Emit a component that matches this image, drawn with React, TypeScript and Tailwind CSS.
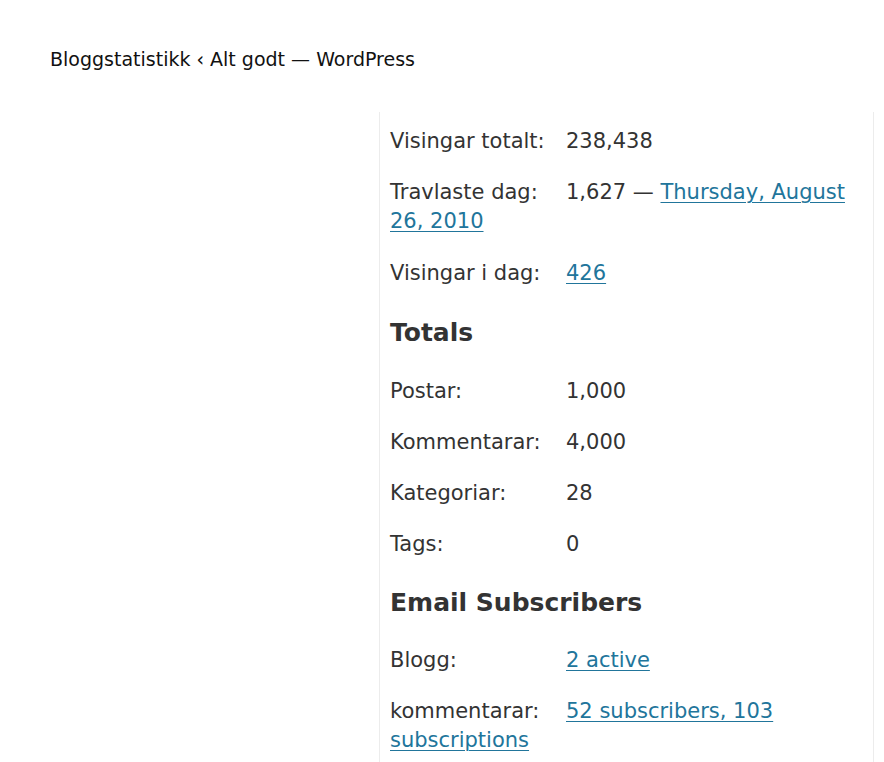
import React from "react";

const Row = ({ label, children, extra, last }: { label: string; children: React.ReactNode; extra?: boolean; last?: boolean }) => (
  <div className={last ? "leading-[28.7px]" : extra ? "mb-[24px] leading-[28.7px]" : "mb-[22.2px] leading-[28.7px]"}>
    <span className="inline-block w-[176px]">{label}</span>
    {children}
  </div>
);

const Link = ({ children }: { children: React.ReactNode }) => (
  <a href="#" className="text-[#21759b] underline decoration-1 underline-offset-[3px]">
    {children}
  </a>
);

export default function App() {
  return (
    <div
      className="flex h-[762px] flex-col overflow-hidden bg-white pt-[47px] text-[#333]"
      style={{ fontFamily: '"DejaVu Sans", Verdana, sans-serif' }}
    >
      <div className="pl-[50px] text-[19px] leading-[24px] text-[#111]">
        Bloggstatistikk ‹ Alt godt — WordPress
      </div>
      <div className="ml-[379px] mt-[41px] w-[495px] flex-1 border-l border-r border-[#ececec] pl-[10px] pr-[4px] pt-[15px] text-[21px]">
        <Row label="Visingar totalt:">238,438</Row>
        <Row label="Travlaste dag:" extra>
          1,627 — <Link>Thursday, August<br />26, 2010</Link>
        </Row>
        <Row label="Visingar i dag:">
          <Link>426</Link>
        </Row>
        <h3 className="mt-[29px] mb-[28px] text-[25px] font-bold leading-[32px]">Totals</h3>
        <Row label="Postar:">1,000</Row>
        <Row label="Kommentarar:">4,000</Row>
        <Row label="Kategoriar:">28</Row>
        <Row label="Tags:">0</Row>
        <h3 className="mt-[28.2px] mb-[27px] text-[25px] font-bold leading-[32px]">Email Subscribers</h3>
        <div className="mb-[23px] leading-[28.7px]">
          <span className="inline-block w-[176px]">Blogg:</span>
          <Link>2 active</Link>
        </div>
        <Row label="kommentarar:" last>
          <Link>52 subscribers, 103<br />subscriptions</Link>
        </Row>
      </div>
    </div>
  );
}
